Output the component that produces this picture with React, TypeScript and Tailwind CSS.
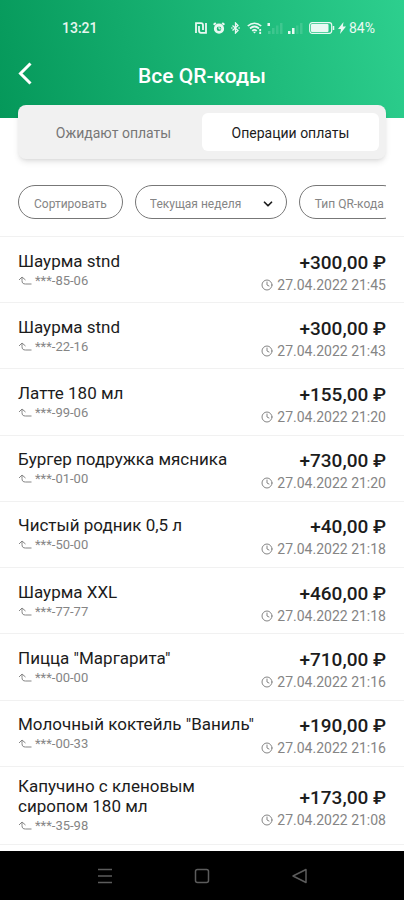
import { ChevronDown, Clock } from 'lucide-react'

interface Operation {
  title: string
  code: string
  amount: string
  date: string
}

const operations: Operation[] = [
  { title: 'Шаурма stnd', code: '***-85-06', amount: '+300,00 ₽', date: '27.04.2022 21:45' },
  { title: 'Шаурма stnd', code: '***-22-16', amount: '+300,00 ₽', date: '27.04.2022 21:43' },
  { title: 'Латте 180 мл', code: '***-99-06', amount: '+155,00 ₽', date: '27.04.2022 21:20' },
  { title: 'Бургер подружка мясника', code: '***-01-00', amount: '+730,00 ₽', date: '27.04.2022 21:20' },
  { title: 'Чистый родник 0,5 л', code: '***-50-00', amount: '+40,00 ₽', date: '27.04.2022 21:18' },
  { title: 'Шаурма XXL', code: '***-77-77', amount: '+460,00 ₽', date: '27.04.2022 21:18' },
  { title: 'Пицца "Маргарита"', code: '***-00-00', amount: '+710,00 ₽', date: '27.04.2022 21:16' },
  { title: 'Молочный коктейль "Ваниль"', code: '***-00-33', amount: '+190,00 ₽', date: '27.04.2022 21:16' },
  { title: 'Капучино с кленовым сиропом 180 мл', code: '***-35-98', amount: '+173,00 ₽', date: '27.04.2022 21:08' },
]

function NfcIcon() {
  return (
    <svg className="h-3 w-3" viewBox="0 0 12 12" fill="none" stroke="currentColor" strokeWidth="1.8">
      <path d="M1 11V1.200h5c1.200 0 2 .8 2 2V8" />
      <path d="M11 1v9.800H6c-1.200 0-2-.8-2-2V4" />
    </svg>
  )
}

function AlarmIcon() {
  return (
    <svg className="h-3 w-3" viewBox="0 0 12 12" fill="none" stroke="currentColor">
      <circle cx="6" cy="6.7" r="3.7" strokeWidth="2.8" />
      <path d="M6 4.5v2.4h1.8" strokeWidth="1" />
      <path d="M.6 2.8 2.8.9M11.4 2.8 9.2.9" strokeWidth="2" />
    </svg>
  )
}

function BluetoothIcon() {
  return (
    <svg className="h-3 w-[10px]" viewBox="0 0 10 12" fill="none" stroke="currentColor" strokeWidth="1.3">
      <path d="m1.5 3.5 5.5 5L4.500 11V1L7 3.500l-5.500 5" />
      <path d="M.3 6h1.200M7.500 6h1.200" />
    </svg>
  )
}

function WifiIcon() {
  return (
    <svg className="h-3 w-4" viewBox="0 0 16 12" fill="none" stroke="currentColor" strokeWidth="1.7">
      <path d="M.8 4c4-3.700 9.400-3.700 13.400 0" />
      <path d="M3 6.500c2.700-2.400 6.300-2.400 9 0" />
      <path d="M5.200 8.800c1.400-1.200 3.200-1.200 4.600 0" />
      <path d="m7.500 11.500-1.500-1.700h3z" fill="currentColor" stroke="none" />
      <path d="M13.200 7v2.200M13.200 10v2" strokeWidth="1.8" />
    </svg>
  )
}

function SignalIcon({ active }: { active: boolean }) {
  return (
    <svg className="h-3 w-4" viewBox="0 0 16 12" fill="currentColor">
      <path d="M1 9h2.500v3H1z" opacity={active ? 1 : 0.2} />
      <path d="M5 6h2.500v6H5z" opacity={active ? 1 : 0.15} />
      <path d="M9 3.500h2.500V12H9z" opacity=".12" />
      <path d="M13 1h2.500v11H13z" opacity=".15" />
      {!active && <path d="M.5 1h2.500v3H.5z" />}
    </svg>
  )
}

function BatteryIcon() {
  return (
    <svg className="h-3 w-[26px]" viewBox="0 0 26 12" fill="none" stroke="currentColor">
      <rect x=".7" y=".7" width="22" height="10.6" rx="2.5" strokeWidth="1.2" />
      <rect x="2" y="2" width="17.5" height="8" rx="1" fill="currentColor" stroke="none" />
      <path d="M24.500 4v4" strokeWidth="1.5" />
    </svg>
  )
}

function BoltIcon() {
  return (
    <svg className="h-3 w-2" viewBox="0 0 8 12" fill="currentColor">
      <path d="M5.500 0 0 7h3L2 12l6-7.500H4.800z" />
    </svg>
  )
}

function ReturnIcon() {
  return (
    <svg className="h-3 w-[14px]" viewBox="0 0 14 12" fill="none" stroke="currentColor" strokeWidth="1">
      <path d="M1 5 4 2l3.500 3M4 2.300v3.200C4 8 5 9 7.500 9H13.500" />
    </svg>
  )
}

function StatusBar() {
  return (
    <div className="flex items-center justify-between pl-[62px] pr-[29px] pt-[18px] text-sm font-medium leading-5 text-white/90">
      <span>13:21</span>
      <div className="flex items-center">
        <div className="flex items-center gap-[6px]">
          <NfcIcon />
          <AlarmIcon />
          <BluetoothIcon />
          <WifiIcon />
        </div>
        <div className="ml-1 flex items-center gap-1">
          <SignalIcon active={false} />
          <SignalIcon active />
        </div>
        <div className="ml-[6px] flex items-center gap-[3px]">
          <BatteryIcon />
          <BoltIcon />
          <span className="font-normal">84%</span>
        </div>
      </div>
    </div>
  )
}

function OperationRow({ operation }: { operation: Operation }) {
  return (
    <li className="flex min-h-[66px] grow items-center justify-between border-t border-[#f1f1f1] px-[18px] py-[7px]">
      <div className="max-w-[244px] pt-[2px]">
        <h2 className="text-[17px] leading-5 text-[#1c1c1c]">{operation.title}</h2>
        <p className="flex items-center gap-[3px] text-[13px] leading-5 text-[#858585]">
          <ReturnIcon />
          {operation.code}
        </p>
      </div>
      <div className="-ml-2 shrink-0 whitespace-nowrap pt-[6px] text-right">
        <p className="text-[19px] font-medium leading-6 text-[#1c1c1c]">{operation.amount}</p>
        <p className="flex items-center justify-end gap-1 text-sm leading-5 text-[#858585]">
          <Clock className="h-3 w-3" strokeWidth={2} />
          {operation.date}
        </p>
      </div>
    </li>
  )
}

export default function App() {
  return (
    <div className="flex min-h-screen flex-col bg-white font-[Roboto,sans-serif]">
      <header className="bg-[linear-gradient(75deg,#05985a,#2dcf8e)] pb-[30px]">
        <StatusBar />
        <div className="mt-[22px] grid grid-cols-[48px_1fr_48px] items-center text-white">
          <button type="button" aria-label="Назад" className="flex h-6 items-center pl-[18px]">
            <svg className="h-6 w-[14px]" viewBox="0 0 14 24" fill="none" stroke="currentColor" strokeWidth="3">
              <path d="m12.500 1.500-10 10 10 10" />
            </svg>
          </button>
          <h1 className="pt-1 text-center text-[21px] font-medium leading-6">Все QR-коды</h1>
        </div>
      </header>

      <main className="flex grow flex-col">
        <div className="relative mx-[18px] -mt-[13px] grid grid-cols-2 rounded-lg bg-[#f1f1f1] px-[7px] py-2 shadow-md">
          <button type="button" className="h-[38px] rounded-md pt-[2px] text-sm text-[#777]">
            Ожидают оплаты
          </button>
          <button type="button" className="h-[38px] rounded-md bg-white pt-[2px] text-sm text-[#1c1c1c]">
            Операции оплаты
          </button>
        </div>

        <div className="mx-[18px] mb-[17px] mt-[26px] flex gap-3 overflow-hidden text-xs text-[#858585]">
          <button type="button" className="h-[34px] shrink-0 rounded-full border border-[#777] px-[15px] pt-1">
            Сортировать
          </button>
          <div className="relative shrink-0">
            <select
              aria-label="Период"
              className="h-[34px] w-[152px] appearance-none rounded-full border border-[#777] bg-white pl-[14px] pt-1"
            >
              <option>Текущая неделя</option>
            </select>
            <ChevronDown className="pointer-events-none absolute right-3 top-3 h-[14px] w-[14px] text-[#1c1c1c]" strokeWidth={3} />
          </div>
          <button type="button" className="h-[34px] shrink-0 rounded-full border border-[#777] px-[15px] pt-1">
            Тип QR-кода
          </button>
        </div>

        <ul className="mb-[6px] flex grow flex-col border-b border-[#f1f1f1]">
          {operations.map((operation) => (
            <OperationRow key={operation.date + operation.code} operation={operation} />
          ))}
        </ul>
      </main>

      <nav className="flex h-[49px] items-center justify-center gap-[82px] bg-black text-[#5c5c5c]">
        <button type="button" aria-label="Недавние">
          <svg className="h-4 w-4" viewBox="0 0 16 16" fill="none" stroke="currentColor" strokeWidth="1.5">
            <path d="M2 1.500h14M2 8h14M2 14.500h14" />
          </svg>
        </button>
        <button type="button" aria-label="Домой">
          <svg className="h-4 w-4" viewBox="0 0 16 16" fill="none" stroke="currentColor" strokeWidth="1.5">
            <rect x="1.5" y="1.5" width="13" height="13" rx="2" />
          </svg>
        </button>
        <button type="button" aria-label="Назад в систему">
          <svg className="h-4 w-4" viewBox="0 0 16 16" fill="none" stroke="currentColor" strokeWidth="1.5" strokeLinejoin="round">
            <path d="M14 1.500v13L1 8z" />
          </svg>
        </button>
      </nav>
    </div>
  )
}
